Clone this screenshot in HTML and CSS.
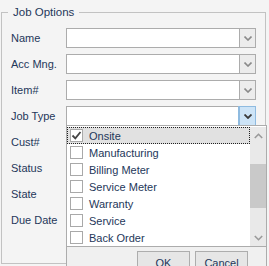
FILE: index.html
```html
<!DOCTYPE html>
<html>
<head>
<meta charset="utf-8">
<link rel="stylesheet" href="styles.css">
</head>
<body>
<fieldset class="group">
  <legend class="group-title">Job Options</legend>
  <div class="form">
    <div class="row"><span class="label">Name</span><div class="combo"><div class="combo-text"></div><div class="combo-btn"><svg width="8" height="5" viewBox="0 0 8 5"><path d="M0.5 0.5 L4 4 L7.5 0.5" fill="none" stroke="#8a8a8a" stroke-width="1.6"/></svg></div></div></div>
    <div class="row"><span class="label">Acc Mng.</span><div class="combo"><div class="combo-text"></div><div class="combo-btn"><svg width="8" height="5" viewBox="0 0 8 5"><path d="M0.5 0.5 L4 4 L7.5 0.5" fill="none" stroke="#8a8a8a" stroke-width="1.6"/></svg></div></div></div>
    <div class="row"><span class="label">Item#</span><div class="combo"><div class="combo-text"></div><div class="combo-btn"><svg width="8" height="5" viewBox="0 0 8 5"><path d="M0.5 0.5 L4 4 L7.5 0.5" fill="none" stroke="#8a8a8a" stroke-width="1.6"/></svg></div></div></div>
    <div class="row"><span class="label">Job Type</span><div class="combo"><div class="combo-text"></div><div class="combo-btn active"><svg width="8" height="5" viewBox="0 0 8 5"><path d="M0.5 0.5 L4 4 L7.5 0.5" fill="none" stroke="#3a3a3a" stroke-width="1.8"/></svg></div></div></div>
    <div class="row"><span class="label">Cust#</span><div class="combo"><div class="combo-text"></div><div class="combo-btn"></div></div></div>
    <div class="row"><span class="label">Status</span><div class="combo"><div class="combo-text"></div><div class="combo-btn"></div></div></div>
    <div class="row"><span class="label">State</span><div class="combo"><div class="combo-text"></div><div class="combo-btn"></div></div></div>
    <div class="row"><span class="label">Due Date</span><div class="combo"><div class="combo-text"></div><div class="combo-btn"></div></div></div>
  </div>
</fieldset>

<div class="popup">
  <div class="popup-body">
    <ul class="list">
      <li class="item selected"><span class="check checked"><svg width="11" height="11" viewBox="0 0 11 11"><path d="M1.5 5.5 L4.3 8.3 L9.5 2" fill="none" stroke="#444" stroke-width="1.8"/></svg></span>Onsite</li>
      <li class="item"><span class="check"></span>Manufacturing</li>
      <li class="item"><span class="check"></span>Billing Meter</li>
      <li class="item"><span class="check"></span>Service Meter</li>
      <li class="item"><span class="check"></span>Warranty</li>
      <li class="item"><span class="check"></span>Service</li>
      <li class="item"><span class="check"></span>Back Order</li>
    </ul>
    <div class="scrollbar">
      <div class="sb-arrow"><svg width="9" height="6" viewBox="0 0 9 6"><path d="M0.8 5 L4.5 1.3 L8.2 5" fill="none" stroke="#9a9a9a" stroke-width="1.6"/></svg></div>
      <div class="sb-track">
        <div class="sb-gap-top"></div>
        <div class="sb-thumb"></div>
      </div>
      <div class="sb-arrow"><svg width="9" height="6" viewBox="0 0 9 6"><path d="M0.8 1 L4.5 4.7 L8.2 1" fill="none" stroke="#9a9a9a" stroke-width="1.6"/></svg></div>
    </div>
  </div>
  <div class="popup-footer">
    <button class="btn">OK</button>
    <button class="btn">Cancel</button>
  </div>
</div>
</body>
</html>
```
FILE: styles.css
```css
html, body {
  margin: 0;
  padding: 0;
}
body {
  width: 269px;
  height: 266px;
  overflow: hidden;
  background: #f4f4f4;
  font-family: "Liberation Sans", Arial, sans-serif;
  font-size: 11px;
  color: #24375a;
  position: relative;
}
.group {
  margin: 5px 3px 2px 1px;
  padding: 0;
  border: 1px solid #c2c2c2;
  height: 259px;
  box-sizing: border-box;
  min-width: 0;
}
.group-title {
  margin-left: 6px;
  padding: 0 5px;
  line-height: 14px;
  font-size: 11.5px;
}
.form {
  padding: 9px 0 0 9px;
  display: flex;
  flex-direction: column;
  gap: 6px;
}
.row {
  display: flex;
  align-items: center;
  height: 20px;
}
.label {
  width: 55px;
  flex: none;
}
.combo {
  width: 190px;
  height: 20px;
  box-sizing: border-box;
  border: 1px solid #acacac;
  background: #fff;
  display: flex;
}
.combo-text {
  flex: 1;
}
.combo-btn {
  width: 15px;
  border-left: 1px solid #acacac;
  background: #ececec;
  display: flex;
  align-items: center;
  justify-content: center;
}
.combo-btn.active {
  background: #cde4f7;
  border-left-color: #8fbbe0;
  outline: 1px solid #8fbbe0;
}
.popup {
  position: absolute;
  left: 66px;
  top: 125px;
  width: 201px;
  height: 160px;
  box-sizing: border-box;
  border: 1px solid #acacac;
  background: #fff;
  display: flex;
  flex-direction: column;
}
.popup-body {
  display: flex;
  height: 119px;
  padding-top: 1px;
}
.list {
  list-style: none;
  margin: 0;
  padding: 0;
  flex: 1;
}
.item {
  height: 17px;
  display: flex;
  align-items: center;
  padding-left: 3px;
  box-sizing: border-box;
}
.item.selected {
  background: #e1e1e1;
  outline: 1px dotted #222;
  outline-offset: -1px;
}
.check {
  width: 13px;
  height: 13px;
  box-sizing: border-box;
  border: 1px solid #a9a9a9;
  background: #fff;
  margin-right: 6px;
  display: flex;
  align-items: center;
  justify-content: center;
}
.scrollbar {
  width: 16px;
  background: #e9e9e9;
  display: flex;
  flex-direction: column;
}
.sb-arrow {
  height: 17px;
  display: flex;
  align-items: center;
  justify-content: center;
}
.sb-track {
  flex: 1;
  display: flex;
  flex-direction: column;
}
.sb-gap-top {
  height: 20px;
}
.sb-thumb {
  height: 44px;
  background: #c9c9c9;
}
.popup-footer {
  border-top: 1px solid #acacac;
  background: #f0f0f0;
  flex: 1;
  display: flex;
  justify-content: flex-end;
  align-items: flex-start;
  gap: 5px;
  padding: 4px 18px 0 0;
}
.btn {
  width: 53px;
  height: 23px;
  border: 1px solid #adadad;
  background: #e6e6e6;
  font-family: "Liberation Sans", Arial, sans-serif;
  font-size: 11px;
  color: #24375a;
  padding: 0;
}
```
